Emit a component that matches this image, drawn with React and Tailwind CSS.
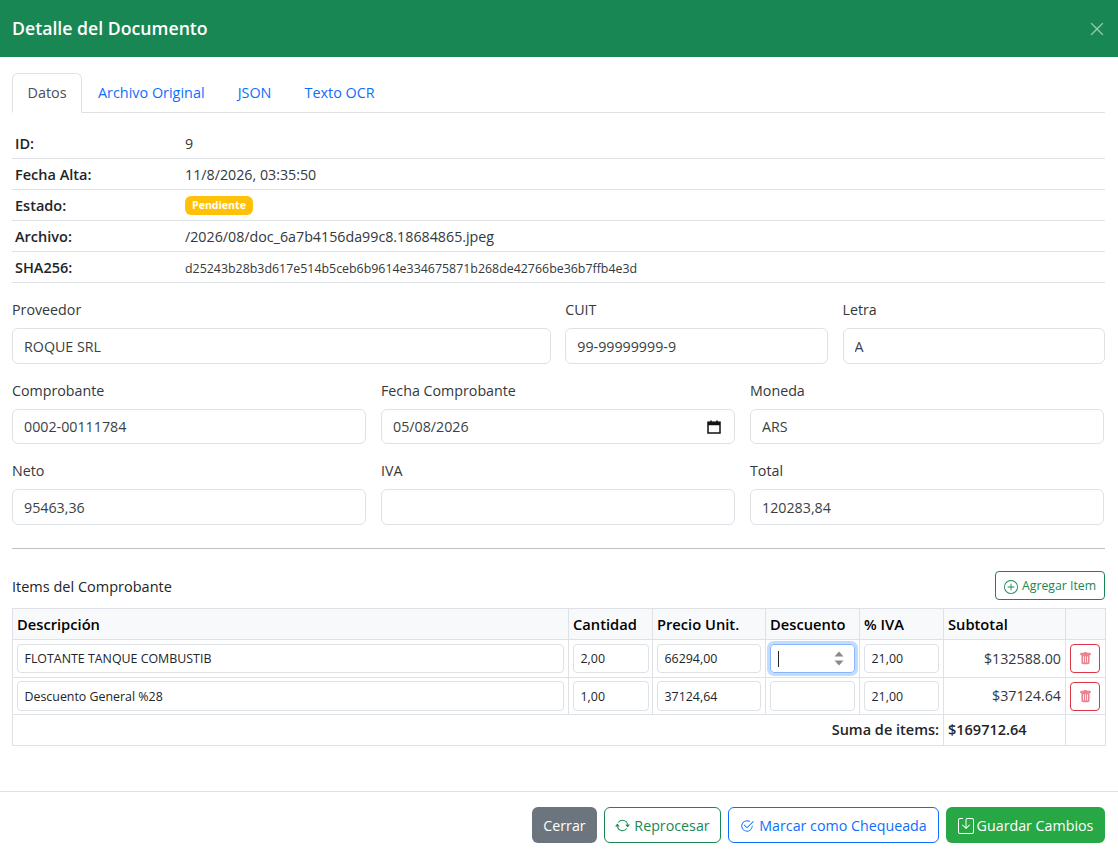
import { BsArrowRepeat, BsCheck2Circle, BsPlusCircle, BsSave, BsTrashFill, BsXLg } from "react-icons/bs";

const font = { fontFamily: '"Open Sans", "Noto Sans", sans-serif' };

const inputCls =
  "block w-full rounded-[6px] border border-[#dee2e6] bg-white px-[11px] text-[14.25px] text-[#3a3f44] outline-none";
const cellInputCls =
  "block w-full rounded-[4px] border border-[#dee2e6] bg-white px-[6.5px] text-[12.4px] text-[#212529] outline-none";

const Field = ({ label, value, h = "h-[36px]" }) => (
  <div>
    <label className="mb-[9px] block h-[18px] text-[14.25px] leading-[18px] text-[#33383c]">{label}</label>
    <input className={inputCls + " " + h} defaultValue={value} readOnly />
  </div>
);

const InfoRow = ({ label, children }) => (
  <div className="flex h-[31px] items-center border-b border-[#dee2e6] pl-[3px] pt-px text-[14.25px] text-[#33383c]">
    <div className="w-[170px] text-[14.5px] font-semibold text-[#212529]">{label}</div>
    <div>{children}</div>
  </div>
);

const TrashButton = () => (
  <button className="flex h-[29px] w-[30px] items-center justify-center rounded-[4px] border border-[#dc3545] text-[#e8858f]">
    <BsTrashFill size={13} />
  </button>
);

const Th = ({ children }) => (
  <th className="border border-[#dee2e6] bg-[#f8f9fa] px-1 text-left text-[14.7px] font-semibold text-black">
    {children}
  </th>
);

const Td = ({ children, className = "" }) => (
  <td className={"border border-[#dee2e6] px-1 " + className}>{children}</td>
);

const items = [
  { desc: "FLOTANTE TANQUE COMBUSTIB", qty: "2,00", price: "66294,00", iva: "21,00", sub: "$132588.00", focus: true, h: "h-[38px]", input: "h-[29px]" },
  { desc: "Descuento General %28", qty: "1,00", price: "37124,64", iva: "21,00", sub: "$37124.64", focus: false, h: "h-[37px]", input: "h-[30px]" },
];

export default function App() {
  return (
    <div className="flex h-[856px] w-[1118px] flex-col overflow-hidden bg-white text-[#212529]" style={font}>
      <header className="flex h-[57px] shrink-0 items-center justify-between bg-[#198754] pl-3 pr-[13px]">
        <h5 className="pb-px text-[17.7px] font-semibold text-white">Detalle del Documento</h5>
        <BsXLg size={16} stroke="currentColor" strokeWidth={0.4} className="text-[#9ccfb6]" />
      </header>

      <main className="flex-1 pl-3 pr-[13px] pt-4">
        <nav className="flex h-[40px] border-b border-[#dee2e6] text-[14.4px] text-[#0d6efd]">
          <div className="flex h-[40px] w-[70px] items-center justify-center rounded-t-[6px] border border-b-white border-[#dee2e6] text-[#495057]">
            Datos
          </div>
          <div className="flex h-[39px] items-center px-4">Archivo Original</div>
          <div className="flex h-[39px] w-[68px] items-center justify-center">JSON</div>
          <div className="flex h-[39px] items-center px-4">Texto OCR</div>
        </nav>

        <section className="mt-[15px]">
          <InfoRow label="ID:">9</InfoRow>
          <InfoRow label="Fecha Alta:">11/8/2026, 03:35:50</InfoRow>
          <InfoRow label="Estado:">
            <span className="block rounded-[6px] bg-[#ffc107] px-[7px] py-[3px] text-[10.6px] font-bold leading-[13px] text-white">Pendiente</span>
          </InfoRow>
          <InfoRow label="Archivo:">/2026/08/doc_6a7b4156da99c8.18684865.jpeg</InfoRow>
          <InfoRow label="SHA256:">
            <span className="text-[12.4px]">d25243b28b3d617e514b5ceb6b9614e334675871b268de42766be36b7ffb4e3d</span>
          </InfoRow>
        </section>

        <div className="mt-[18px] grid grid-cols-[539px_263px_1fr] gap-x-[14.25px]">
          <Field label="Proveedor" value="ROQUE SRL" />
          <Field label="CUIT" value="99-99999999-9" />
          <Field label="Letra" value="A" />
        </div>

        <div className="mt-[18px] grid grid-cols-[354px_354px_354px] gap-x-[15px]">
          <Field label="Comprobante" value="0002-00111784" h="h-[35px]" />
          <div>
            <label className="mb-[9px] block h-[18px] text-[14.25px] leading-[18px] text-[#33383c]">Fecha Comprobante</label>
            <div className="flex h-[35px] items-center justify-between rounded-[6px] border border-[#dee2e6] pl-[11px] pr-[13px] text-[14.25px] text-[#3a3f44]">
              <span>05/08/2026</span>
              <svg width="14" height="14" viewBox="0 0 14 14" fill="none" stroke="#111" strokeWidth="1.5">
                <rect x="1" y="2.2" width="12" height="10.8" />
                <path d="M1 4h12" strokeWidth="2.5" />
                <path d="M4 .5v2M10 .5v2" />
              </svg>
            </div>
          </div>
          <Field label="Moneda" value="ARS" h="h-[35px]" />
        </div>

        <div className="mt-[18px] grid grid-cols-[354px_354px_354px] gap-x-[15px]">
          <Field label="Neto" value="95463,36" />
          <Field label="IVA" value="" />
          <Field label="Total" value="120283,84" />
        </div>

        <hr className="mt-[23px] border-[#bfc2c4]" />

        <div className="mt-[22px] flex h-[29px] items-center justify-between">
          <h6 className="pt-[2px] text-[14.5px] font-medium text-[#212529]">Items del Comprobante</h6>
          <button className="flex h-[29px] w-[110px] items-center justify-center gap-1 rounded-[4px] border border-[#198754] pt-[2px] text-[12.25px] text-[#198754]">
            <BsPlusCircle size={14} />
            Agregar Item
          </button>
        </div>

        <table className="mt-2 w-[1093px] table-fixed border-collapse">
          <colgroup>
            <col className="w-[556px]" />
            <col className="w-[84px]" />
            <col className="w-[113px]" />
            <col className="w-[94px]" />
            <col className="w-[84px]" />
            <col className="w-[122px]" />
            <col className="w-[40px]" />
          </colgroup>
          <thead>
            <tr className="h-[31px]">
              <Th>Descripción</Th>
              <Th>Cantidad</Th>
              <Th>Precio Unit.</Th>
              <Th>Descuento</Th>
              <Th>% IVA</Th>
              <Th>Subtotal</Th>
              <Th />
            </tr>
          </thead>
          <tbody>
            {items.map((item) => (
              <tr key={item.desc} className={item.h}>
                <Td><input className={cellInputCls + " " + item.input} defaultValue={item.desc} readOnly /></Td>
                <Td className="pr-[3px]"><input className={cellInputCls + " " + item.input} defaultValue={item.qty} readOnly /></Td>
                <Td><input className={cellInputCls + " " + item.input} defaultValue={item.price} readOnly /></Td>
                <Td>
                  {item.focus ? (
                    <div className="flex h-[29px] items-center justify-between rounded-[4px] border border-[#86b7fe] pl-[7px] pr-[10px] shadow-[0_0_0_3px_rgba(13,110,253,0.25)]">
                      <span className="h-[16px] w-px bg-[#212529]" />
                      <svg width="10" height="15" viewBox="0 0 10 15" fill="#8a8a8a">
                        <path d="M5 0.5 9.5 5.5H.5z" />
                        <path d="M5 14.5 .5 9.5h9z" />
                      </svg>
                    </div>
                  ) : (
                    <input className={cellInputCls + " " + item.input} readOnly />
                  )}
                </Td>
                <Td><input className={cellInputCls + " " + item.input} defaultValue={item.iva} readOnly /></Td>
                <Td className="text-right text-[14.25px] text-[#33383c]">{item.sub}</Td>
                <Td><TrashButton /></Td>
              </tr>
            ))}
            <tr className="h-[31px] text-[14.5px] font-semibold">
              <td colSpan={5} className="border border-[#dee2e6] px-1 text-right">Suma de items:</td>
              <td className="border border-[#dee2e6] px-1">$169712.64</td>
              <td className="border border-[#dee2e6]" />
            </tr>
          </tbody>
        </table>
      </main>

      <footer className="flex h-[65px] shrink-0 items-start justify-end gap-[7px] border-t border-[#dee2e6] pr-[13px] pt-[15px] text-[14.25px]">
        <button className="flex h-[36px] w-[65px] items-center justify-center rounded-[6px] bg-[#6c757d] pt-px text-white">Cerrar</button>
        <button className="flex h-[36px] w-[117px] items-center justify-center gap-1 rounded-[6px] border border-[#198754] pt-px text-[#198754]">
          <BsArrowRepeat size={15} />
          Reprocesar
        </button>
        <button className="flex h-[36px] w-[211px] items-center justify-center gap-[5px] rounded-[6px] border border-[#0d6efd] pt-px text-[#0d6efd]">
          <BsCheck2Circle size={14} />
          Marcar como Chequeada
        </button>
        <button className="flex h-[36px] w-[159px] items-center justify-center gap-[3px] rounded-[6px] bg-[#28a745] pt-px text-white">
          <BsSave size={16} />
          Guardar Cambios
        </button>
      </footer>
    </div>
  );
}
